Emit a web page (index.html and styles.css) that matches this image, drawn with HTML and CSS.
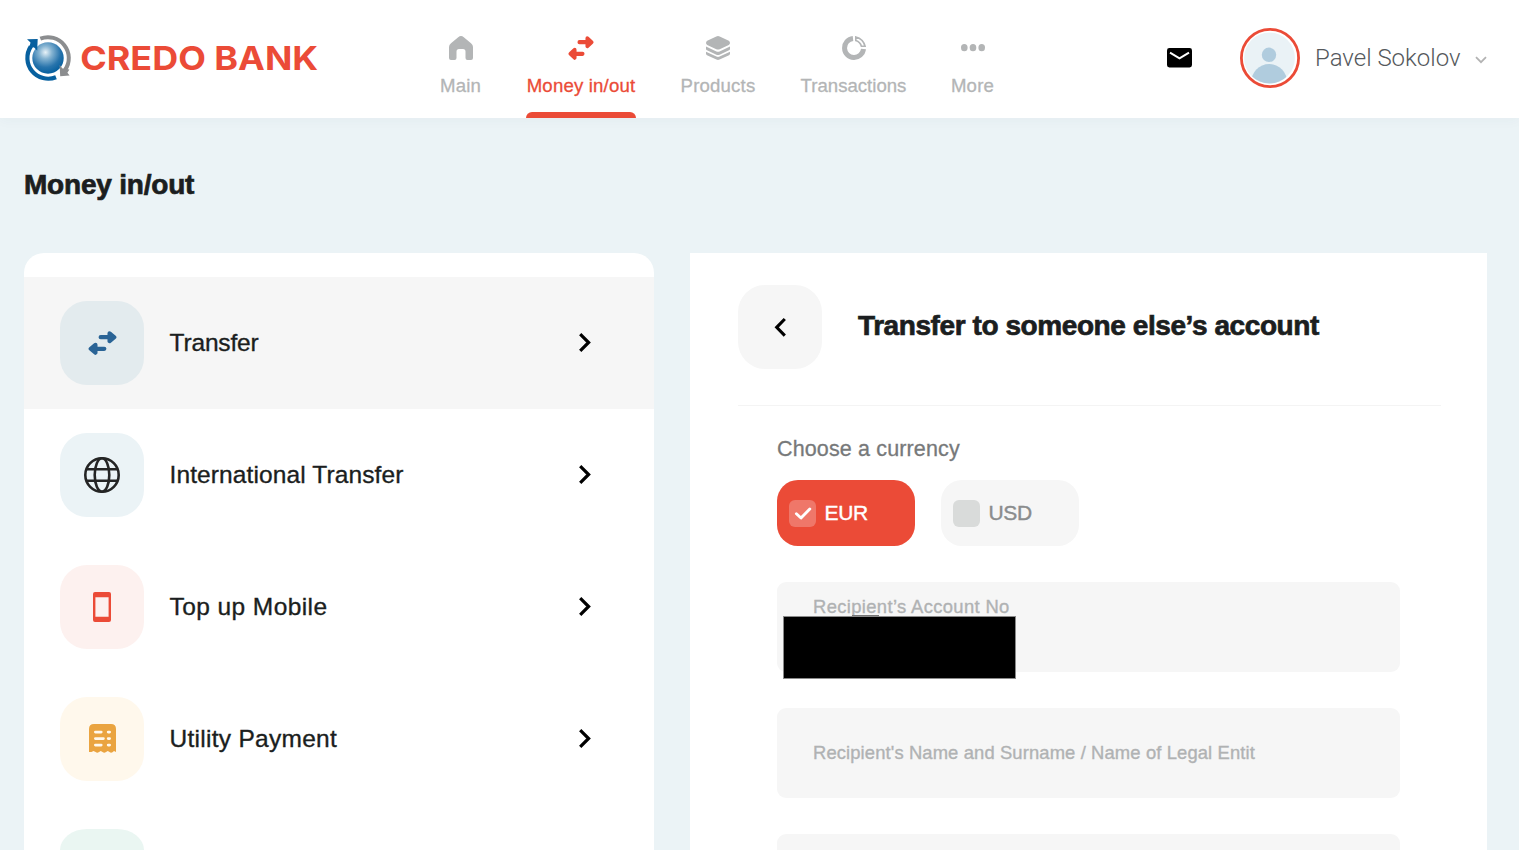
FILE: index.html
```html
<!DOCTYPE html>
<html lang="en">
<head>
<meta charset="utf-8">
<title>Credo Bank – Money in/out</title>
<link rel="stylesheet" href="styles.css">
</head>
<body>
<svg class="defs" aria-hidden="true">
  <symbol id="swap" viewBox="0 0 28 24">
    <path d="M12.3 6.2H21M15.7 17.8H7" stroke="currentColor" stroke-width="4.2" stroke-linecap="round" fill="none"/>
    <path d="M20.8 2.2L25.4 6.2L20.8 10.2ZM7.2 13.8L2.6 17.8L7.2 21.8Z" fill="currentColor" stroke="currentColor" stroke-width="4" stroke-linejoin="round"/>
  </symbol>
  <symbol id="chev" viewBox="0 0 14 22"><path d="M2.2 2.1L10.6 10.5L2.2 18.9" fill="none" stroke="currentColor" stroke-width="3.2"/></symbol>
</svg>
<header class="header">
  <a class="logo">
    <svg width="300" height="60" viewBox="0 0 300 60">
      <defs><radialGradient id="ball" cx=".42" cy=".32" r=".68"><stop offset="0" stop-color="#e8f2f8"/><stop offset=".3" stop-color="#86b4d2"/><stop offset=".7" stop-color="#2874ac"/><stop offset="1" stop-color="#07609f"/></radialGradient></defs>
      <circle cx="24" cy="28" r="15.7" fill="url(#ball)"/>
      <path d="M16.3 8.7A20.8 20.8 0 0 1 41 40" fill="none" stroke="#8b8d8f" stroke-width="4"/>
      <path d="M35.6 35L36.2 46.2L45.6 45.6L43.4 42.8L45.4 39.5L38.5 38.4Z" fill="#8b8d8f"/>
      <path d="M32 47.2A20.8 20.8 0 0 1 6.8 16.5" fill="none" stroke="#07609f" stroke-width="4.2"/>
      <path d="M3 9.3L13.7 9L13.2 20.4L9.8 17.3L5 19L6.5 12.6Z" fill="#07609f"/>
      <text class="logo-text" x="56.2" y="39.6" textLength="238" lengthAdjust="spacingAndGlyphs">CREDO BANK</text>
    </svg>
  </a>
  <nav class="nav">
    <a class="nav-item n-main"><svg width="24" height="24" viewBox="0 0 24 24"><path d="M9.2 1.2Q12-1 14.8 1.2L22 7.2Q24 9 24 11V22Q24 24 22 24H18.5Q16.5 24 16.5 22V15.5Q16.5 13 14 13H10Q7.5 13 7.5 15.5V22Q7.5 24 5.5 24H2Q0 24 0 22V11Q0 9 2 7.2Z" fill="currentColor"/></svg><span>Main</span></a>
    <a class="nav-item n-money active"><svg width="26" height="24" viewBox="0 0 28 24" preserveAspectRatio="none"><use href="#swap"/></svg><span>Money in/out</span></a>
    <a class="nav-item n-prod"><svg width="24" height="24" viewBox="0 0 24 24"><path d="M10.3.5Q12-.3 13.7.5L22.8 4.8Q24 5.5 24 7Q24 8.2 22.8 9L13.7 13.2Q12 14 10.3 13.2L1.2 9Q0 8.2 0 7Q0 5.5 1.2 4.8Z" fill="currentColor"/><path d="M0 10.6L10.4 15.4Q12 16.1 13.6 15.4L24 10.6V12.9Q24 13.8 23 14.3L13.6 18.7Q12 19.4 10.4 18.7L1 14.3Q0 13.8 0 12.9ZM0 15.8L10.4 20.6Q12 21.3 13.6 20.6L24 15.8V17.8Q24 18.7 23 19.2L13.6 23.6Q12 24.3 10.4 23.6L1 19.2Q0 18.7 0 17.8Z" fill="currentColor"/></svg><span>Products</span></a>
    <a class="nav-item n-trans"><svg width="24" height="24" viewBox="0 0 24 24" fill="none" stroke="currentColor"><path d="M11 2.5A9.5 9.5 0 1 0 21.5 13" stroke-width="5"/><path d="M13.8.9Q21.2 2.8 23.1 10.2H19.4Q18.3 6.2 13.8 4.6Z" stroke-width="1.6"/></svg><span>Transactions</span></a>
    <a class="nav-item n-more"><svg width="24" height="24" viewBox="0 0 24 24" fill="currentColor"><ellipse cx="3.3" cy="11.7" rx="3.3" ry="3.6"/><ellipse cx="12" cy="11.7" rx="3.3" ry="3.6"/><ellipse cx="20.7" cy="11.7" rx="3.3" ry="3.6"/></svg><span>More</span></a>
  </nav>
  <div class="user">
    <svg class="mail" width="25" height="20" viewBox="0 0 25 20"><rect width="25" height="19.4" rx="2.4"/><path d="M3 4.7L12.5 10.3L22 4.7" fill="none" stroke="#fff" stroke-width="2"/></svg>
    <svg class="avatar" width="60" height="60" viewBox="0 0 60 60"><defs><clipPath id="face"><circle cx="29.5" cy="30" r="25.4"/></clipPath></defs><circle cx="30" cy="30" r="28.6" fill="#fff" stroke="#eb4b37" stroke-width="2.8"/><g clip-path="url(#face)"><rect width="60" height="60" fill="#eaf2f6"/><circle cx="29" cy="26.8" r="7.2" fill="#b0ccde"/><ellipse cx="29.2" cy="55" rx="18.2" ry="19" fill="#b0ccde"/></g></svg>
    <span class="user-name">Pavel Sokolov</span>
    <svg class="caret" width="12" height="8" viewBox="0 0 12 8"><path d="M1 1.2L6 6.2L11 1.2" fill="none" stroke="#b3b3b3" stroke-width="1.8"/></svg>
  </div>
</header>
<main class="page">
  <h1 class="title">Money in/out</h1>
  <div class="columns">
    <section class="menu">
      <a class="row selected"><i class="tile t-transfer"><svg width="29" height="24" viewBox="0 0 28 24" preserveAspectRatio="none"><use href="#swap"/></svg></i><span class="r0">Transfer</span><svg class="chev"><use href="#chev"/></svg></a>
      <a class="row"><i class="tile t-globe"><svg width="36" height="36" viewBox="0 0 36 36" fill="none" stroke="#252525" stroke-width="2.6"><circle cx="18" cy="18" r="16.7"/><ellipse cx="18" cy="18" rx="7.3" ry="16.7"/><path d="M2.3 12.3H33.7M2.3 23.7H33.7"/></svg></i><span class="r1">International Transfer</span><svg class="chev"><use href="#chev"/></svg></a>
      <a class="row"><i class="tile t-phone"><svg width="18" height="30" viewBox="0 0 18 30"><path fill="#eb4b37" fill-rule="evenodd" d="M2 0H16Q18 0 18 2V28Q18 30 16 30H2Q0 30 0 28V2Q0 0 2 0ZM2.4 5.2V24.8H15.6V5.2Z"/></svg></i><span class="r2">Top up Mobile</span><svg class="chev"><use href="#chev"/></svg></a>
      <a class="row"><i class="tile t-bill"><svg width="27" height="29" viewBox="0 0 27 29"><path fill="#eaa440" d="M5 0H22Q27 0 27 5V28L25 27L23.5 28.2Q22 29.2 20.5 28L18.8 27L17 28Q15.3 29.4 13.5 28L11.8 27L10 28Q8.3 29.4 6.6 28L4.5 27L2.5 28H0V5Q0 0 5 0Z"/><path d="M6.4 8.1H12.2M6.4 14.6H14.4M6.4 21.1H12.2M19.2 8.1H20.6M19.2 14.6H20.6M19.2 21.1H20.6" stroke="#fff8ec" stroke-width="2.8" stroke-linecap="round"/></svg></i><span class="r3">Utility Payment</span><svg class="chev"><use href="#chev"/></svg></a>
      <a class="row"><i class="tile t-green"></i></a>
    </section>
    <section class="panel">
      <div class="panel-head">
        <a class="back"><svg width="14" height="22" viewBox="0 0 14 22"><path d="M11.8 3L3.7 11.3L11.8 19.6" fill="none" stroke="#000" stroke-width="3.1"/></svg></a>
        <h2>Transfer to someone else’s account</h2>
      </div>
      <form class="form">
        <div class="caption">Choose a currency</div>
        <div class="currencies">
          <label class="cur on"><i class="box"><svg width="18" height="14" viewBox="0 0 18 14"><path d="M2.4 7.8L7 12L15.8 3" fill="none" stroke="#fff" stroke-width="2.9" stroke-linecap="round" stroke-linejoin="round"/></svg></i>EUR</label>
          <label class="cur"><i class="box"></i>USD</label>
        </div>
        <div class="field filled"><span>Recipient’s Account No</span><b class="mask"></b></div>
        <div class="field"><span>Recipient's Name and Surname / Name of Legal Entit</span></div>
        <div class="field cut"></div>
      </form>
    </section>
  </div>
</main>
</body>
</html>
```
FILE: styles.css
```css
* { box-sizing: border-box; }
body { margin: 0; height: 850px; overflow: hidden; background: #ebf3f6; color: #1b1e20; font-family: "Liberation Sans", Arial, sans-serif; }
svg { display: block; flex: none; }
.defs { position: absolute; width: 0; height: 0; }
.header { position: relative; height: 118px; background: #fff; display: flex; align-items: flex-start; box-shadow: 0 2px 12px rgba(40, 70, 90, .04); }
.logo { width: 416px; padding: 30px 0 0 24px; flex: none; }
.logo-text { font: 700 33px Inter, sans-serif; fill: #eb4b37; }
.nav { display: flex; height: 118px; gap: 45px; padding-left: 24px; }
.nav-item { display: flex; flex-direction: column; align-items: center; padding-top: 36px; color: #b3b5b6; font-size: 18.6px; line-height: 22px; white-space: nowrap; -webkit-text-stroke: .3px; }
.nav-item svg { margin-bottom: 15px; }
.nav-item span { letter-spacing: .18px; }
.nav-item::after { content: ""; margin-top: auto; width: 100%; height: 6px; border-radius: 6px 6px 0 0; }
.n-main { width: 41px; }
.n-money { width: 110px; }
.n-prod { width: 74px; }
.n-trans { width: 107px; }
.n-trans span { letter-spacing: 0; }
.n-more { width: 41px; }
.active { color: #eb4b37; }
.active::after { background: #eb4b37; }
.user { margin-left: auto; display: flex; align-items: center; height: 60px; margin-top: 28px; padding-right: 32px; }
.avatar { margin-left: 48px; }
.user-name { width: 145px; margin: 0 15px; font: 300 24px/30px Roboto, sans-serif; color: #55595c; white-space: nowrap; }
.caret { margin-top: 4px; }
.page { height: 732px; overflow: hidden; padding: 51px 32px 0 24px; display: flex; flex-direction: column; }
.title { margin: 0; font-size: 28px; line-height: 32px; letter-spacing: -.2px; -webkit-text-stroke: .7px; }
.columns { flex: 1; min-height: 0; display: grid; grid-template-columns: 630px 797px; grid-template-rows: 597px; gap: 36px; margin-top: 52px; }
.menu { overflow: hidden; background: #fff; border-radius: 20px 20px 0 0; padding-top: 24px; }
.row { height: 132px; display: flex; align-items: center; padding: 0 62px 0 36px; font-size: 24.5px; color: #1b1e20; -webkit-text-stroke: .35px; }
.row:last-child { height: 45px; padding-top: 24px; align-items: flex-start; }
.row span { margin-left: 25.5px; white-space: nowrap; }
.r0 { letter-spacing: -.15px; }
.r1 { letter-spacing: .11px; }
.r2 { letter-spacing: .42px; }
.r3 { letter-spacing: .28px; }
.selected { background: #f6f6f6; }
.chev { width: 14px; height: 22px; margin-left: auto; color: #000; }
.tile { width: 84px; height: 84px; border-radius: 27px; display: flex; align-items: center; justify-content: center; flex: none; }
.t-transfer { background: #e3ebee; color: #2a6496; }
.t-globe { background: #ebf3f6; }
.t-phone { background: #fdf1ef; }
.t-bill { background: #fff8ec; }
.t-bill svg { margin: 0 0 2px 1px; }
.t-green { height: 21px; border-radius: 27px 27px 0 0 / 21px 21px 0 0; background: #eaf6f2; }
.panel { overflow: hidden; background: #fff; padding: 32px 48px 0; }
.panel-head { display: flex; height: 121px; width: 703px; border-bottom: 1px solid #f4f4f4; }
.back { width: 84px; height: 84px; border-radius: 27px; background: #f6f6f6; display: flex; align-items: center; justify-content: center; }
h2 { margin: 25px 0 0 36px; font-size: 28px; line-height: 32px; letter-spacing: -.42px; white-space: nowrap; -webkit-text-stroke: .7px; }
.form { padding: 31px 39px 0; }
.caption { font-size: 21.5px; line-height: 24px; letter-spacing: .14px; color: #77797a; -webkit-text-stroke: .3px; }
.currencies { display: flex; gap: 26px; margin: 19px 0 36px; }
.cur { width: 138px; height: 66px; border-radius: 21px; background: #f6f6f6; display: flex; align-items: center; padding-left: 12px; font-size: 21px; letter-spacing: -.3px; color: #8a8c8d; -webkit-text-stroke: .4px; }
.box { width: 27px; height: 27px; border-radius: 6px; margin-right: 8.5px; background: #d9dbda; display: flex; align-items: center; justify-content: center; }
.on { background: #eb4b37; color: #fff; }
.on .box { background: #ef7769; }
.field { position: relative; width: 623px; height: 90px; margin-bottom: 36px; border-radius: 9px; background: #f6f6f6; display: flex; align-items: center; padding-left: 36px; font-size: 18.4px; line-height: 22px; letter-spacing: .12px; color: #b0b2b3; -webkit-text-stroke: .35px; }
.filled { align-items: flex-start; padding-top: 14px; letter-spacing: .36px; }
.cut { height: 16px; margin: 0; border-radius: 9px 9px 0 0; }
.mask { position: absolute; left: 6px; top: 34px; width: 233px; height: 63px; background: #000; border: 1px solid #8a8a8a; }
.mask::before { content: ""; position: absolute; left: 68px; top: -2px; width: 27px; height: 1px; background: #777; }
```
